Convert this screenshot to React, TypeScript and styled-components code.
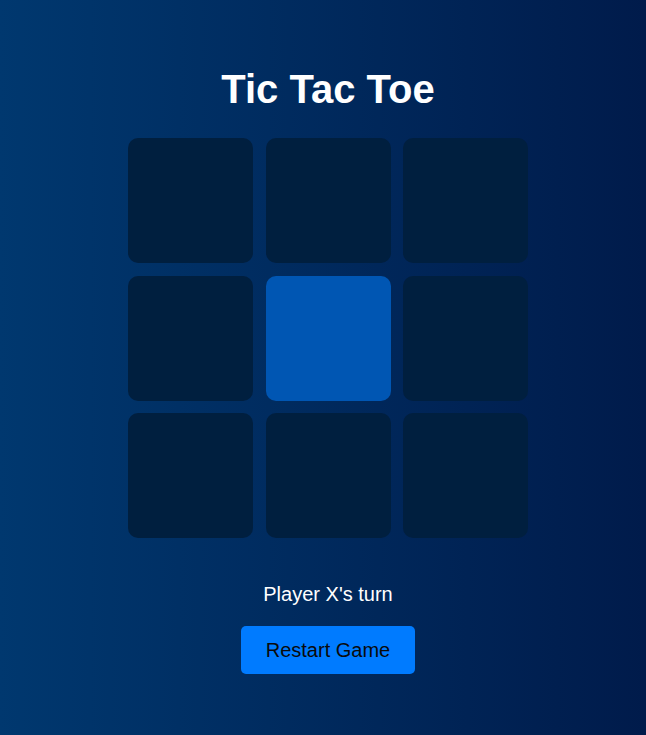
import React, { useState } from "react";
import styled, { createGlobalStyle } from "styled-components";

const GlobalStyle = createGlobalStyle`
  html, body {
    margin: 0;
    padding: 0;
  }
  body {
    min-height: 100vh;
    background: linear-gradient(to right, #00386f 0%, #001b4b 100%);
    font-family: "Liberation Sans", Arial, sans-serif;
    color: #ffffff;
  }
`;

const Page = styled.div`
  display: flex;
  flex-direction: column;
  align-items: center;
  padding: 40px 0 0 10px;
  min-height: 100vh;
  box-sizing: border-box;
`;

const Title = styled.h1`
  margin: 26px 0;
  font-size: 40px;
  line-height: 46px;
  font-weight: 700;
  color: #ffffff;
`;

const Board = styled.div`
  display: grid;
  grid-template-columns: repeat(3, 125px);
  grid-auto-rows: 125px;
  gap: 12.5px;
`;

const Cell = styled.button<{ $active?: boolean }>`
  border: none;
  padding: 0;
  border-radius: 10px;
  background: ${(p) => (p.$active ? "#0056b3" : "#001f3f")};
  color: #ffffff;
  font-family: "Liberation Sans", Arial, sans-serif;
  font-size: 60px;
  font-weight: 700;
  cursor: pointer;
`;

const Status = styled.p`
  margin: 45px 0 20px;
  font-size: 20px;
  line-height: 23px;
  color: #ffffff;
`;

const RestartButton = styled.button`
  border: none;
  border-radius: 5px;
  background: #007bff;
  color: #0a0a0a;
  font-family: "Liberation Sans", Arial, sans-serif;
  font-size: 20px;
  line-height: 24px;
  padding: 12px 25px;
  cursor: pointer;
`;

export default function App() {
  const [board, setBoard] = useState<(string | null)[]>(Array(9).fill(null));
  const [xNext, setXNext] = useState(true);

  const play = (i: number) => {
    if (board[i]) return;
    const next = board.slice();
    next[i] = xNext ? "X" : "O";
    setBoard(next);
    setXNext(!xNext);
  };

  const restart = () => {
    setBoard(Array(9).fill(null));
    setXNext(true);
  };

  return (
    <>
      <GlobalStyle />
      <Page>
        <Title>Tic Tac Toe</Title>
        <Board>
          {board.map((v, i) => (
            <Cell key={i} $active={i === 4} onClick={() => play(i)}>
              {v}
            </Cell>
          ))}
        </Board>
        <Status>Player {xNext ? "X" : "O"}'s turn</Status>
        <RestartButton onClick={restart}>Restart Game</RestartButton>
      </Page>
    </>
  );
}
